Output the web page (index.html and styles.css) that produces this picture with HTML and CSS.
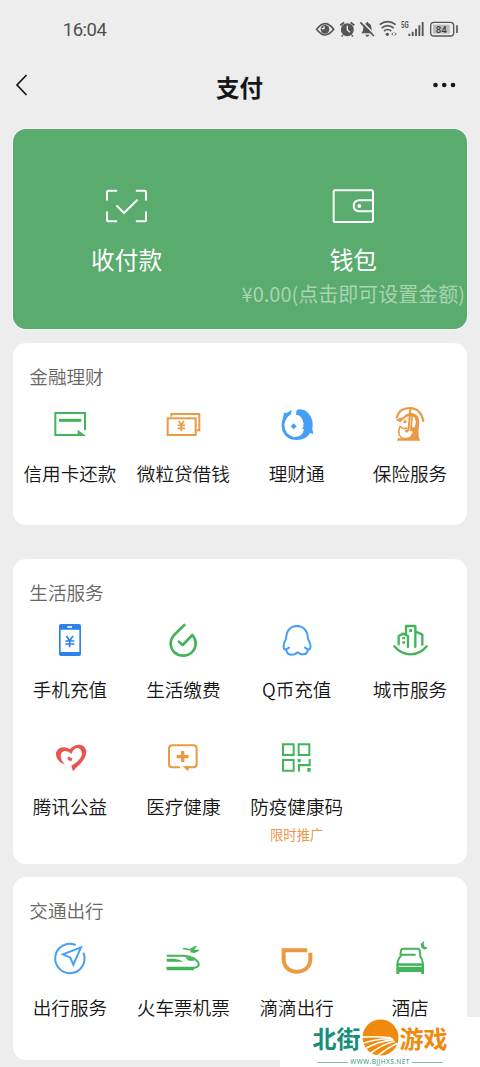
FILE: index.html
```html
<!DOCTYPE html>
<html lang="zh-CN">
<head>
<meta charset="utf-8">
<title>支付</title>
<link rel="stylesheet" href="styles.css">
</head>
<body>
<div class="screen">
  <header class="status">
    <span class="time">16:04</span>
    <svg class="status-icons" viewBox="45 30 435 54">
      <g fill="none" stroke="#555" stroke-width="5">
        <path d="M50 58Q75 24 101 58Q75 92 50 58Z"/>
        <path d="M239 44Q263 26 287 44M245 54Q263 40 281 54M252 63Q263 54 274 63" stroke-width="5"/>
        <path d="M328 71V78M338 65V78M348 56V78M358 46V78M368 36V78" stroke-width="5.500"/>
        <rect x="392" y="37" width="69" height="41" rx="10" stroke-width="4"/>
        <path d="M471 46V69"/>
        <path d="M280 68L275 72L280 76M284 68L289 72L284 76" stroke-width="2.500"/>
      </g>
      <g fill="#555">
        <circle cx="75" cy="58" r="13"/>
        <circle cx="142" cy="59" r="19.500"/>
        <path d="M119 44L130 35L134 39L123 48ZM165 44L154 35L150 39L161 48ZM126 74L123 79L127 80L131 77ZM158 74L161 79L157 80L153 77Z"/>
        <path d="M184 70Q190 65 190 53Q190 42 199 40Q199 35 202 35Q205 35 205 40Q214 42 214 53Q214 65 220 70ZM196 74H208Q206 80 202 80Q198 80 196 74Z"/>
        <circle cx="262" cy="73" r="5"/>
      </g>
      <path d="M72 49V56H65" fill="none" stroke="#eee" stroke-width="4"/>
      <path d="M142 47V60L150 67" fill="none" stroke="#ededed" stroke-width="4"/>
      <path d="M184 33L226 76" stroke="#ededed" stroke-width="5"/>
      <path d="M181 37L222 78" stroke="#555" stroke-width="5"/>
      <rect x="399" y="44" width="50" height="27" fill="#bcbcbc"/>
      <text x="303" y="53" class="net" textLength="23" lengthAdjust="spacingAndGlyphs">5G</text>
      <text x="407" y="68" class="battery">84</text>
    </svg>
  </header>

  <nav class="navbar">
    <svg class="back" viewBox="0 0 14 24"><path d="M11.500 2L2 12L11.500 22"/></svg>
    <h1 class="title">支付</h1>
    <svg class="more" viewBox="0 0 24 6"><circle cx="2.500" cy="3" r="2.300"/><circle cx="11.200" cy="3" r="2.300"/><circle cx="20" cy="3" r="2.300"/></svg>
  </nav>

  <section class="wallet">
    <div class="pay">
      <svg class="pay-icon" viewBox="310 48 144 120"><path d="M322 89V67Q322 62 327 62H350M411 62H434Q439 62 439 67V89M439 127V149Q439 154 434 154H411M350 154H327Q322 154 322 149V127" stroke-width="6"/><path d="M352 108L373 129L412 91" stroke-width="6"/></svg>
      <span class="pay-label">收付款</span>
    </div>
    <div class="pay">
      <svg class="pay-icon" viewBox="298 48 144 120"><rect x="312" y="61" width="118" height="95" rx="4" stroke-width="6"/><path d="M429 91H388Q372 93 372 107.500Q372 123 388 124H429" stroke-width="6"/><circle class="dot" cx="389" cy="108" r="6"/></svg>
      <span class="pay-label">钱包</span>
      <span class="pay-note">¥0.00(点击即可设置金额)</span>
    </div>
  </section>

  <section class="card finance">
    <h2 class="card-title">金融理财</h2>
    <div class="grid">
      <div class="item">
        <svg class="icon green" viewBox="150 195 120 120"><path class="line" stroke-width="6" d="M255 270V219H166V285H235"/><path class="line" stroke-width="9" d="M177 241H244"/><path class="fill" d="M233 269L258 288H233Z"/></svg>
        <span class="label">信用卡还款</span>
      </div>
      <div class="item">
        <svg class="icon orange" viewBox="490 195 120 120"><rect class="line" x="504" y="235" width="84" height="50" stroke-width="6"/><path class="line" stroke-width="6" d="M515 230V222H599V271H591"/><path class="line" stroke-width="5" d="M537 243L545 254L553 243M545 254V274M534 256H556M534 265H556"/></svg>
        <span class="label">微粒贷借钱</span>
      </div>
      <div class="item">
        <svg class="icon sky" viewBox="109 195 120 120"><path class="fill" d="M153 209L151 223Q133 233 131 254Q132 283 159 291Q186 292 190 267L184 268L188 260Q190 247 184 236Q179 226 167 225Q163 208 178 208Q205 209 215 242Q217 255 215 267L218 282L208 279Q197 300 168 300Q136 299 125 272Q120 250 127 235L130 217Q135 222 142 217Z"/><path class="fill" d="M159 250L168 259L159 268L150 259Z"/></svg>
        <span class="label">理财通</span>
      </div>
      <div class="item">
        <svg class="icon orange" viewBox="449 195 120 120"><path class="line" stroke-width="6" stroke-linecap="round" d="M469 233Q475 205 508 204Q542 205 549 243M510 206L505 266Q500 280 497 272"/><path class="fill" d="M467 240Q477 233 489 232Q497 218 516 219Q538 223 537 250Q533 272 535 289L539 302H469L474 293Q480 296 485 294H509Q520 288 515 272L508 273L511 262H523Q530 245 522 232Q508 225 495 233Q492 238 486 240L480 247Z"/><path class="line" stroke-width="5" d="M479 258Q473 272 477 285Q482 296 497 296Q514 296 517 280M479 259Q489 269 501 264M516 222L512 265"/><circle class="fill" cx="494" cy="245" r="5"/></svg>
        <span class="label">保险服务</span>
      </div>
    </div>
  </section>

  <section class="card life">
    <h2 class="card-title">生活服务</h2>
    <div class="grid">
      <div class="item">
        <svg class="icon blue" viewBox="150 198 120 120"><path class="fill" fill-rule="evenodd" d="M183 207H237Q243 207 243 213V297Q243 303 237 303H183Q177 303 177 297V213Q177 207 183 207ZM182 224V291H238V224Z"/><path class="white" stroke-width="5" d="M202 216H216"/><path class="line" stroke-width="5" d="M199 243L209 257L219 243M209 257V277M196 258H223M196 267H223"/></svg>
        <span class="label">手机充值</span>
      </div>
      <div class="item">
        <svg class="icon green" viewBox="490 198 120 120"><path class="line" stroke-width="8" stroke-linecap="round" stroke-linejoin="round" d="M554 210L527 236Q513 249 513 265C513 287 530 302 550 302C572 302 588 286 588 265Q588 252 578 240L549 270L538 260"/></svg>
        <span class="label">生活缴费</span>
      </div>
      <div class="item">
        <svg class="icon sky" viewBox="111 198 120 120"><path class="line" stroke-width="6" stroke-linecap="round" stroke-linejoin="round" d="M147 278Q139 284 133 283Q127 272 138 252Q140 214 171 213Q202 214 204 252Q216 272 209 283Q203 284 195 278M139 284Q140 299 154 299Q166 299 172 292Q180 299 190 298Q203 297 203 284"/></svg>
        <span class="label">Q币充值</span>
      </div>
      <div class="item">
        <svg class="icon green" viewBox="449 198 120 120"><path class="line" stroke-width="7" stroke-linecap="round" stroke-linejoin="round" d="M475 268V243L489 236L503 243V276M497 238V213H525V276M526 230L546 239V269M462 274Q482 298 511 298Q540 298 559 274"/><path class="fill" d="M507 222H515V231H507ZM486 246H494V253H486ZM486 259H494V266H486Z"/></svg>
        <span class="label">城市服务</span>
      </div>
      <div class="item">
        <svg class="icon red" viewBox="150 54 120 120"><path class="fill" d="M195 135Q166 121 168 98Q173 82 194 82Q205 83 210 88Q219 74 239 74Q259 77 259 97Q257 119 233 139L219 154L214 137Q242 122 246 103Q245 85 233 84Q220 86 214 102Q206 92 193 93Q182 96 182 108Q183 123 195 135Z"/><path class="fill" d="M202 114L207 109L211 113L217 115L214 124L205 121Z"/></svg>
        <span class="label">腾讯公益</span>
      </div>
      <div class="item">
        <svg class="icon orange" viewBox="490 54 120 120"><path class="line" stroke-width="6" stroke-linecap="round" d="M539 142H518Q508 142 508 132V86Q508 76 518 76H581Q591 76 591 86V132Q591 142 581 142H568"/><path class="fill" d="M549 138H570L565 154ZM544 93H554V105H567V115H554V126H544V115H531V105H544Z"/></svg>
        <span class="label">医疗健康</span>
      </div>
      <div class="item">
        <svg class="icon green" viewBox="110 54 120 120"><path class="line" stroke-width="6" d="M128 73H160V105H128ZM175 73H207V105H175ZM128 120H160V152H128Z"/><path class="fill" d="M172 117H181V127H172ZM205 117H211V139H179V155H173V132H205ZM201 144H211V155H201Z"/></svg>
        <span class="label">防疫健康码</span>
        <span class="promo">限时推广</span>
      </div>
    </div>
  </section>

  <section class="card travel">
    <h2 class="card-title">交通出行</h2>
    <div class="grid">
      <div class="item">
        <svg class="icon sky" viewBox="150 147 120 120"><path class="line" stroke-width="6" d="M227 165A44 44 0 1 0 250 188"/><path class="line" stroke-width="6" d="M243 172L189 193L211 203L220 224Z"/></svg>
        <span class="label">出行服务</span>
      </div>
      <div class="item">
        <svg class="icon green" viewBox="490 147 120 120"><path class="line" stroke-width="6" d="M501 197H552Q584 200 596 217Q601 232 584 233H501"/><path class="fill" d="M501 206H524Q541 207 551 215H501ZM501 231H588L581 241H501ZM558 202Q573 199 586 212H568Q560 210 558 202ZM547 177L553 173L571 177L587 167L592 168L583 179H601Q597 185 584 189L570 187L575 182Z"/></svg>
        <span class="label">火车票机票</span>
      </div>
      <div class="item">
        <svg class="icon orange" viewBox="110 57 120 120"><path class="line" stroke-width="12" d="M201 91H130V116C130 141 147 155 170 155C194 155 210 140 210 116V98"/></svg>
        <span class="label">滴滴出行</span>
      </div>
      <div class="item">
        <svg class="icon green" viewBox="449 57 120 120"><path class="line" stroke-width="6" stroke-linejoin="round" d="M480 106L482 91Q483 86 489 86H531Q537 86 538 91L540 106M483 104H526M483 106Q471 119 471 133H548Q548 119 538 106"/><path class="fill" d="M468 132H551V162H543V156H477V162H468Z"/><path class="white" stroke-width="3" d="M475 139H544"/><path class="fill" d="M552 64Q535 71 545 84Q554 93 562 83Q545 82 552 64Z"/></svg>
        <span class="label">酒店</span>
      </div>
    </div>
  </section>

  <aside class="brand">
    <div class="brand-row">
      <span class="brand-word teal">北街</span>
      <svg class="sun" viewBox="364 295 112 112"><circle cx="420" cy="351" r="54.500" fill="#f08a0c"/><path d="M362 350Q410 347 452 352M362 370Q410 353 457 355M366 389Q415 360 460 358M381 406Q425 369 464 363M403 414Q440 382 470 369" fill="none" stroke="#fff" stroke-width="5"/></svg>
      <span class="brand-word amber">游戏</span>
    </div>
    <div class="brand-url">WWW.BJJHXS.NET</div>
  </aside>
</div>
</body>
</html>
```
FILE: styles.css
```css
* { box-sizing: border-box; }

body {
  margin: 0;
  background: #ededed;
  font-family: "Noto Sans CJK SC", sans-serif;
  color: #161616;
}

.screen {
  position: relative;
  height: 1067px;
  padding: 0 13.3px;
  overflow: hidden;
}

.status {
  display: flex;
  justify-content: space-between;
  align-items: center;
  height: 60px;
  padding: 0 6.7px 0 49.5px;
}
.time { font: 18.5px/24px Roboto, sans-serif; color: #505050; letter-spacing: -0.5px; }
.status-icons { width: 145px; height: 18px; margin-top: -2px; }
.net { font: bold 25px Roboto, sans-serif; fill: #555; }
.battery { font: 500 29px Roboto, sans-serif; fill: #404040; }

.navbar {
  display: flex;
  justify-content: space-between;
  align-items: center;
  height: 50px;
  margin-bottom: 19px;
}
.back { width: 14px; height: 24px; margin-left: 2px; fill: none; stroke: #161616; stroke-width: 1.7; }
.title { margin: 3px 0 0 17px; font-size: 23.5px; line-height: 34px; font-weight: 700; }
.more { width: 24px; height: 6px; margin-right: 10px; fill: #161616; }

.wallet {
  display: grid;
  grid-template-columns: 1fr 1fr;
  height: 200px;
  padding-top: 57px;
  border-radius: 13px;
  background: #5aab6e;
  box-shadow: 0 0 0 1px #f8fbf8;
  color: #fff;
}
.pay { display: flex; flex-direction: column; align-items: center; }
.pay-icon { width: 48px; height: 40px; fill: none; stroke: #fff; stroke-linecap: round; stroke-linejoin: round; }
.pay-icon .dot { fill: #fff; stroke: none; }
.pay-label { margin-top: 15px; font-size: 23.7px; line-height: 36px; }
.pay-note { margin-top: 3px; font-size: 20px; line-height: 28px; white-space: nowrap; color: #a9d5b4; }

.card { border-radius: 13px; background: #fff; }
.finance { height: 182px; margin-top: 14px; }
.life { height: 304.5px; margin-top: 34px; }
.travel { height: 183px; margin-top: 13.5px; }
.card-title {
  margin: 0;
  padding: 19px 0 0 16px;
  font-size: 18.6px;
  line-height: 28px;
  font-weight: 350;
  color: #666;
}
.grid {
  display: grid;
  grid-template-columns: repeat(4, 1fr);
  grid-auto-rows: 117px;
  padding-top: 15px;
}
.item { display: flex; flex-direction: column; align-items: center; white-space: nowrap; }
.icon { width: 40px; height: 40px; }
.label { margin-top: 14px; font-size: 18.6px; line-height: 28px; font-weight: 350; }
.promo { margin-top: 5px; font-size: 13.3px; line-height: 20px; color: #e8974a; }

.green { color: #42b45c; }
.orange { color: #ea9a42; }
.sky { color: #45a0f5; }
.blue { color: #2c82ea; }
.red { color: #e8544e; }
.line { fill: none; stroke: currentColor; }
.fill { fill: currentColor; }
.white { fill: none; stroke: #fff; }

.brand {
  position: absolute;
  right: 0;
  bottom: 0;
  width: 200px;
  height: 50px;
  background: #fff;
}
.brand-row { display: flex; align-items: center; justify-content: center; height: 41px; gap: 1px; }
.brand-word { font-size: 24px; line-height: 36px; font-weight: 700; }
.teal { color: #168f78; }
.amber { color: #f08a0c; }
.sun { width: 37px; height: 37px; }
.brand-url {
  display: flex;
  align-items: center;
  justify-content: center;
  gap: 2px;
  height: 8px;
  font: 6.5px/8px "Open Sans", sans-serif;
  color: #168f78;
  letter-spacing: 0.45px;
}
.brand-url::before, .brand-url::after { content: ""; width: 31px; height: 1px; background: #7dbfb2; }
```
